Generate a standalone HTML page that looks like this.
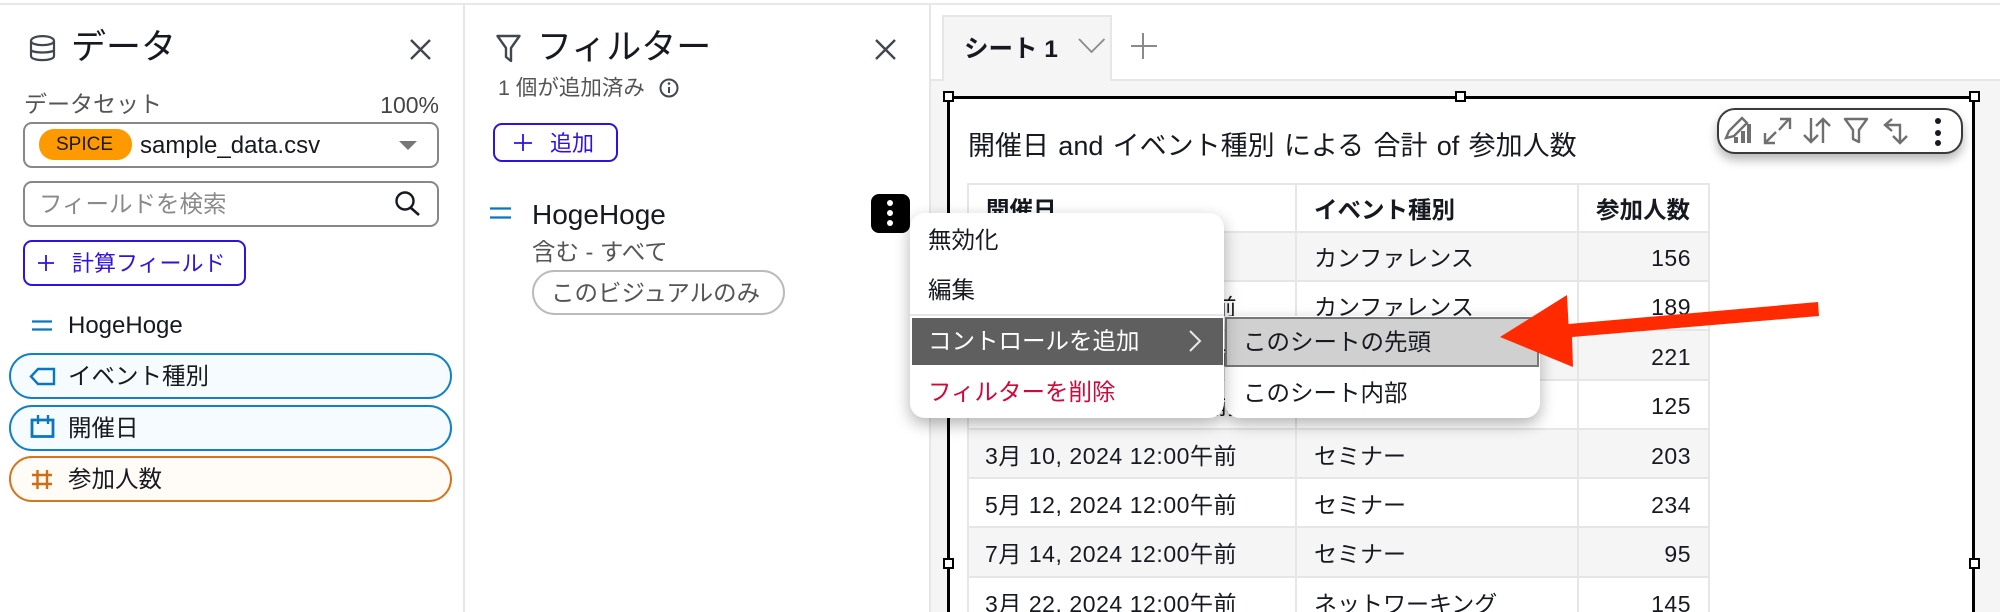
<!DOCTYPE html>
<html lang="ja"><head><meta charset="utf-8"><title>QuickSight</title>
<style>
html,body{margin:0;padding:0;background:#fff}
#p{position:relative;width:2000px;height:612px;overflow:hidden;background:#fff;font-family:"Liberation Sans","Noto Sans CJK JP",sans-serif;color:#16191f}
#p div{position:absolute;box-sizing:border-box}
.t{white-space:nowrap;line-height:40px;height:40px}
.box{border:2px solid #878787;border-radius:9px;background:#fff}
.btn{border:2px solid #2f12e0;border-radius:9px;background:#fff}
.pill{left:9px;width:443px;height:46px;border-radius:23px;border:2px solid #1280c6;background:#f5fbff}
.h{font-weight:700;font-size:23.5px}
.c{font-size:23px;color:#16191f}
.d{font-size:23px;letter-spacing:.55px}
.n{font-size:23px;letter-spacing:.5px;text-align:right;width:100px;left:1591px}
.m{font-size:23.5px}
</style></head><body><div id="p">

<div style="left:0;top:3px;width:2000px;height:2px;background:#e8e8e8"></div>
<div style="left:463px;top:5px;width:2px;height:607px;background:#e6e6e6"></div>
<div style="left:929px;top:5px;width:2px;height:607px;background:#e6e6e6"></div>

<!-- canvas -->
<div style="left:931px;top:79px;width:1069px;height:533px;background:#f5f5f5;border-top:2px solid #e6e6e6"></div>
<div style="left:942px;top:15px;width:170px;height:66px;background:#f5f5f5;border:2px solid #e6e6e6;border-bottom:0"></div>
<div class="t" style="left:964px;top:30px;font-size:24.500px;font-weight:700">シート 1</div>

<!-- visual -->
<div style="left:947px;top:96px;width:1028px;height:540px;background:#fff;border:3px solid #000"></div>
<div class="t" style="left:968px;top:126px;font-size:27px;word-spacing:1.800px">開催日 and イベント種別 による 合計 of 参加人数</div>

<!-- table -->
<div style="left:967px;top:184px;width:743px;height:428px;background:#fff"></div>
<div style="left:967px;top:232px;width:743px;height:49px;background:#f5f5f5"></div>
<div style="left:967px;top:330px;width:743px;height:50px;background:#f5f5f5"></div>
<div style="left:967px;top:429px;width:743px;height:49px;background:#f5f5f5"></div>
<div style="left:967px;top:527px;width:743px;height:50px;background:#f5f5f5"></div>
<div style="left:967px;top:183px;width:743px;height:2px;background:#e6e6e6"></div>
<div style="left:967px;top:231px;width:743px;height:2px;background:#e6e6e6"></div>
<div style="left:967px;top:280px;width:743px;height:2px;background:#e6e6e6"></div>
<div style="left:967px;top:329px;width:743px;height:2px;background:#e6e6e6"></div>
<div style="left:967px;top:379px;width:743px;height:2px;background:#e6e6e6"></div>
<div style="left:967px;top:428px;width:743px;height:2px;background:#e6e6e6"></div>
<div style="left:967px;top:477px;width:743px;height:2px;background:#e6e6e6"></div>
<div style="left:967px;top:526px;width:743px;height:2px;background:#e6e6e6"></div>
<div style="left:967px;top:576px;width:743px;height:2px;background:#e6e6e6"></div>
<div style="left:967px;top:183px;width:2px;height:429px;background:#e6e6e6"></div>
<div style="left:1295px;top:183px;width:2px;height:429px;background:#e6e6e6"></div>
<div style="left:1577px;top:183px;width:2px;height:429px;background:#e6e6e6"></div>
<div style="left:1708px;top:183px;width:2px;height:429px;background:#e6e6e6"></div>

<div class="t h" style="left:986px;top:190px">開催日</div>
<div class="t h" style="left:1314px;top:190px">イベント種別</div>
<div class="t h" style="left:1596px;top:190px">参加人数</div>

<div class="t d" style="left:985px;top:238px">1月 5, 2024 12:00午前</div>
<div class="t d" style="left:985px;top:287px">2月 20, 2024 12:00午前</div>
<div class="t d" style="left:985px;top:337px">4月 18, 2024 12:00午前</div>
<div class="t d" style="left:985px;top:386px">6月 25, 2024 12:00午前</div>
<div class="t d" style="left:985px;top:436px">3月 10, 2024 12:00午前</div>
<div class="t d" style="left:985px;top:485px">5月 12, 2024 12:00午前</div>
<div class="t d" style="left:985px;top:534px">7月 14, 2024 12:00午前</div>
<div class="t d" style="left:985px;top:584px">3月 22, 2024 12:00午前</div>

<div class="t c" style="left:1314px;top:238px">カンファレンス</div>
<div class="t c" style="left:1314px;top:287px">カンファレンス</div>
<div class="t c" style="left:1314px;top:436px">セミナー</div>
<div class="t c" style="left:1314px;top:485px">セミナー</div>
<div class="t c" style="left:1314px;top:534px">セミナー</div>
<div class="t c" style="left:1314px;top:584px">ネットワーキング</div>

<div class="t n" style="top:238px">156</div>
<div class="t n" style="top:287px">189</div>
<div class="t n" style="top:337px">221</div>
<div class="t n" style="top:386px">125</div>
<div class="t n" style="top:436px">203</div>
<div class="t n" style="top:485px">234</div>
<div class="t n" style="top:534px">95</div>
<div class="t n" style="top:584px">145</div>

<!-- handles -->
<div style="left:943px;top:91px;width:11px;height:11px;background:#fff;border:2px solid #000"></div>
<div style="left:1455px;top:91px;width:11px;height:11px;background:#fff;border:2px solid #000"></div>
<div style="left:1969px;top:91px;width:11px;height:11px;background:#fff;border:2px solid #000"></div>
<div style="left:943px;top:558px;width:11px;height:11px;background:#fff;border:2px solid #000"></div>
<div style="left:1969px;top:558px;width:11px;height:11px;background:#fff;border:2px solid #000"></div>

<!-- visual toolbar -->
<div style="left:1717px;top:108px;width:246px;height:46px;background:#fff;border:2px solid #3a3a3a;border-radius:18px;box-shadow:0 6px 10px rgba(0,0,0,.28)"></div>

<!-- data panel -->
<div class="t" style="left:71px;top:28px;font-size:35px">データ</div>
<div class="t" style="left:24px;top:84px;font-size:23px;color:#555">データセット</div>
<div class="t" style="right:1561px;top:85px;font-size:23px;color:#444">100%</div>
<div class="box" style="left:23px;top:122px;width:416px;height:46px"></div>
<div style="left:39px;top:129px;width:93px;height:31px;border-radius:15px;background:#ff9900"></div>
<div class="t" style="left:56px;top:125px;font-size:19px;color:#16191f">SPICE</div>
<div class="t" style="left:140px;top:126px;font-size:24px">sample_data.csv</div>
<div class="box" style="left:23px;top:181px;width:416px;height:46px"></div>
<div class="t" style="left:39px;top:184px;font-size:23.500px;color:#8a8a8a">フィールドを検索</div>
<div class="btn" style="left:23px;top:240px;width:223px;height:46px"></div>
<div class="t" style="left:72px;top:244px;font-size:22px;color:#2f12e0">計算フィールド</div>
<div class="t" style="left:68px;top:306px;font-size:24px">HogeHoge</div>
<div class="pill" style="top:353px"></div>
<div class="pill" style="top:405px"></div>
<div class="pill" style="top:456px;border-color:#d8741c;background:#fffcf7"></div>
<div class="t" style="left:68px;top:356px;font-size:23.500px">イベント種別</div>
<div class="t" style="left:68px;top:408px;font-size:23.500px">開催日</div>
<div class="t" style="left:68px;top:459px;font-size:23.500px">参加人数</div>

<!-- filter panel -->
<div class="t" style="left:537px;top:28px;font-size:35px">フィルター</div>
<div class="t" style="left:498px;top:68px;font-size:21.500px;color:#555">1 個が追加済み</div>
<div class="btn" style="left:493px;top:123px;width:125px;height:39px"></div>
<div class="t" style="left:550px;top:124px;font-size:22px;color:#2f12e0">追加</div>
<div class="t" style="left:532px;top:195px;font-size:28px">HogeHoge</div>
<div class="t" style="left:532px;top:232px;font-size:23.500px;color:#555">含む - すべて</div>
<div style="left:532px;top:270px;width:253px;height:45px;border:2px solid #bbb;border-radius:23px;background:#fff"></div>
<div class="t" style="left:551px;top:273px;font-size:23.500px;color:#555">このビジュアルのみ</div>
<div style="left:871px;top:194px;width:39px;height:39px;background:#000;border-radius:8px"></div>
<div style="left:887px;top:200px;width:6px;height:6px;background:#fff;border-radius:50%"></div>
<div style="left:887px;top:210px;width:6px;height:6px;background:#fff;border-radius:50%"></div>
<div style="left:887px;top:220px;width:6px;height:6px;background:#fff;border-radius:50%"></div>

<!-- icons -->
<svg style="position:absolute;left:0;top:0" width="2000" height="612" viewBox="0 0 2000 612" fill="none">
 <!-- db -->
 <g stroke="#414750" stroke-width="2.2">
  <path d="M31 41c0-6.500 23-6.500 23 0v15c0 5.500-23 5.500-23 0z"/><path d="M31 41c0 5.500 23 5.500 23 0M31 49.500c0 4 23 4 23 0"/>
 </g>
 <!-- close -->
 <path d="M411 40l19 19M430 40l-19 19" stroke="#414750" stroke-width="2.4"/>
 <path d="M876 40l19 19M895 40l-19 19" stroke="#414750" stroke-width="2.4"/>
 <!-- caret -->
 <path d="M399 141h18l-9 9z" fill="#777"/>
 <!-- search -->
 <circle cx="405" cy="201" r="8.5" stroke="#16191f" stroke-width="2.4"/>
 <path d="M411 208l8 7" stroke="#16191f" stroke-width="2.6"/>
 <!-- plus -->
 <path d="M46 255v16M38 263h16" stroke="#2f12e0" stroke-width="1.800"/>
 <path d="M523 134v17M514 143h18" stroke="#2f12e0" stroke-width="1.800"/>
 <!-- equals -->
 <path d="M32 321.500h20M32 329.500h20" stroke="#0a76bd" stroke-width="2.200"/>
 <path d="M490 208.500h21M490 217.500h21" stroke="#0a76bd" stroke-width="2.200"/>
 <!-- tag -->
 <path d="M54 369v15H38l-7-7.500 7-7.500z" stroke="#0a76bd" stroke-width="2.400"/>
 <!-- calendar -->
 <path d="M32 420h21v16.500H32z" stroke="#0a76bd" stroke-width="2.800"/>
 <path d="M38 415v9M48 415v9" stroke="#0a76bd" stroke-width="2.400"/>
 <!-- hash -->
 <path d="M37.500 470v19M47 470v19M32 475h20M32 484h20" stroke="#d26a10" stroke-width="2.400"/>
 <!-- funnel -->
 <path d="M497.500 36h22l-8.500 12v13l-5-4v-9z" stroke="#414750" stroke-width="2.400" stroke-linejoin="round"/>
 <!-- info -->
 <circle cx="669" cy="88" r="8.500" stroke="#414750" stroke-width="2"/>
 <path d="M669 87v6" stroke="#414750" stroke-width="2"/><circle cx="669" cy="83.500" r="1.300" fill="#414750"/>
 <!-- tab chevron and plus -->
 <path d="M1079 39l12.500 13 13-13" stroke="#8a8a8a" stroke-width="1.800"/>
 <path d="M1143 33v26M1131 46h26" stroke="#8a8a8a" stroke-width="2"/>
 <!-- toolbar icons -->
 <g stroke="#6f6f6f" stroke-width="2.400">
  <path d="M1726 138l3-7 13-13 5 5-13 13z"/>
  <path d="M1734 143h4v-6h-4z" fill="#6f6f6f" stroke="none"/>
  <path d="M1741 143h4v-12h-4zM1747 143h4v-19h-4z" fill="#6f6f6f" stroke="none"/>
  <path d="M1765 143l11-11M1779 130l10-11"/>
  <path d="M1765 133v10h10M1780 119h10v10"/>
  <path d="M1811 118v24M1804 135l7 7 7-7"/>
  <path d="M1823 143v-24M1816 126l7-7 7 7"/>
  <path d="M1845 119h22l-8 11v12l-6-3v-9z" stroke-linejoin="round"/>
  <path d="M1892 119l-7 6 7 6M1885 125h15v17M1893 136l7 7 7-7"/>
 </g>
 <circle cx="1938" cy="121" r="3" fill="#16191f"/><circle cx="1938" cy="133" r="3" fill="#16191f"/><circle cx="1938" cy="143" r="3" fill="#16191f"/>
</svg>

<!-- menus -->
<div style="left:1225px;top:316px;width:315px;height:102px;background:#fff;border-radius:0 0 15px 15px;box-shadow:0 6px 16px rgba(0,0,0,.3)"></div>
<div style="left:1225px;top:317px;width:314px;height:50px;background:#d0d0d0;border:2px solid #777"></div>
<div class="t m" style="left:1243px;top:322px">このシートの先頭</div>
<div class="t m" style="left:1243px;top:373px">このシート内部</div>

<div style="left:910px;top:213px;width:314px;height:205px;background:#fff;border-radius:15px;box-shadow:0 6px 16px rgba(0,0,0,.3)"></div>
<div class="t m" style="left:928px;top:220px">無効化</div>
<div class="t m" style="left:928px;top:270px">編集</div>
<div style="left:910px;top:314px;width:314px;height:2px;background:#e6e6e6"></div>
<div style="left:912px;top:318px;width:311px;height:47px;background:#5f5f5f"></div>
<div class="t m" style="left:928px;top:321px;color:#fff">コントロールを追加</div>
<div class="t m" style="left:928px;top:372px;color:#d1083a">フィルターを削除</div>
<svg style="position:absolute;left:1185px;top:328px" width="20" height="26" fill="none"><path d="M5 3l10 10L5 23" stroke="#e8e8e8" stroke-width="2"/></svg>

<!-- arrow -->
<svg style="position:absolute;left:0;top:0" width="2000" height="612" viewBox="0 0 2000 612">
 <path d="M1500 337L1567 295L1568.500 324L1818 302L1819 316L1572 337L1573 367Z" fill="#ff2a00"/>
</svg>
</div></body></html>
